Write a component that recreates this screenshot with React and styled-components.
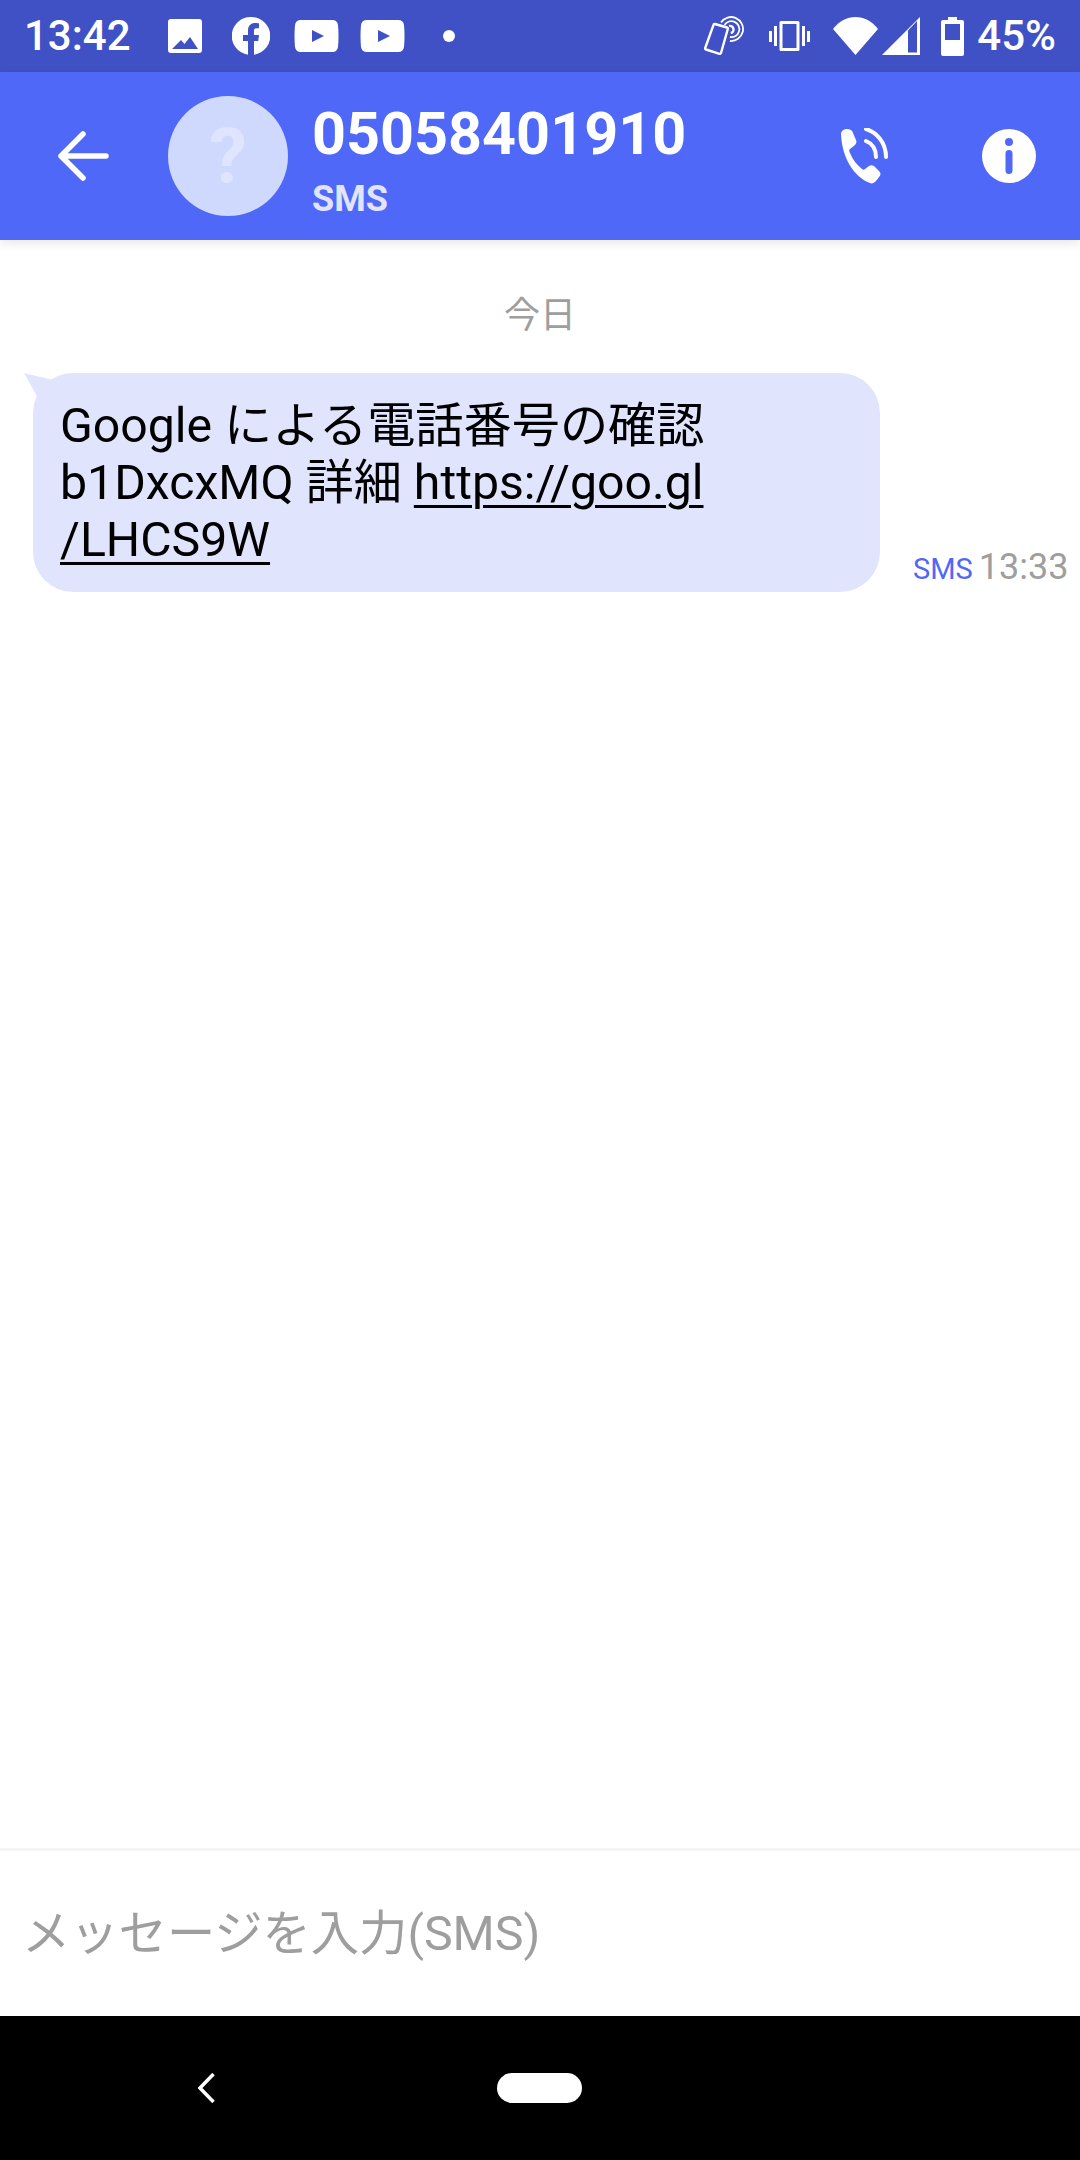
import React from 'react';
import styled, { createGlobalStyle } from 'styled-components';

const Global = createGlobalStyle`
  html, body {
    margin: 0;
    padding: 0;
    background: #fff;
  }
  body {
    font-family: Roboto, "Noto Sans CJK JP", sans-serif;
  }
`;

const Screen = styled.div`
  width: 1080px;
  height: 2160px;
  display: flex;
  flex-direction: column;
  overflow: hidden;
  background: #fff;
`;

const StatusBar = styled.div`
  height: 72px;
  flex: none;
  display: flex;
  align-items: center;
  justify-content: space-between;
  padding: 0 24px;
  background: #3f51c5;
  color: #fff;
`;

const StatusGroup = styled.div`
  display: flex;
  align-items: center;
`;

const StatusText = styled.span`
  font-size: 42px;
  font-weight: 500;
  line-height: 72px;
  margin: ${props => props.$margin || 0};
`;

const Icon = styled.svg`
  display: block;
  flex: none;
  margin: ${props => props.$margin || 0};
  fill: #fff;
`;

const Header = styled.header`
  height: 168px;
  flex: none;
  position: relative;
  display: flex;
  align-items: center;
  padding: 0 44px 0 58px;
  background: #4f68f8;
  box-shadow: 0 3px 10px rgba(0, 0, 0, 0.1);
`;

const Avatar = styled.div`
  width: 120px;
  height: 120px;
  flex: none;
  margin-left: 58px;
  border-radius: 50%;
  background: #cfd9fe;
  color: #dfe5fe;
  font-size: 76px;
  font-weight: 700;
  line-height: 120px;
  text-align: center;
`;

const Contact = styled.div`
  flex: 1;
  margin: 6px 0 0 24px;
  display: flex;
  flex-direction: column;
  color: #fff;
`;

const Number = styled.div`
  font-size: 59.3px;
  font-weight: 700;
  line-height: 70px;
`;

const Channel = styled.div`
  font-size: 36px;
  font-weight: 700;
  line-height: 42px;
  margin-top: 9px;
  color: #e0e5fd;
`;

const Thread = styled.main`
  flex: 1;
  display: flex;
  flex-direction: column;
  align-items: stretch;
`;

const DateLabel = styled.div`
  margin-top: 52px;
  font-size: 36px;
  line-height: 48px;
  color: #9e9e9e;
  text-align: center;
`;

const MessageRow = styled.div`
  display: flex;
  align-items: flex-end;
  margin-top: 33px;
  padding-left: 33px;
`;

const Bubble = styled.div`
  position: relative;
  width: 847px;
  height: 219px;
  box-sizing: border-box;
  flex: none;
  padding: 24px 27px;
  border-radius: 40px;
  background: #e0e5fd;
  color: #000;
  font-size: 48.2px;
  line-height: 57px;

  &::before {
    content: '';
    position: absolute;
    left: -9px;
    top: 0;
    width: 30px;
    height: 26px;
    background: #e0e5fd;
    clip-path: polygon(0 0, 100% 28%, 48% 100%);
  }
`;

const MessageLink = styled.a`
  color: #000;
  text-decoration: underline;
  text-decoration-thickness: 3px;
  text-underline-offset: 6px;
`;

const Meta = styled.div`
  display: flex;
  align-items: baseline;
  gap: 6px;
  margin: 0 0 3px 33px;
  line-height: 40px;
  white-space: nowrap;
`;

const MetaChannel = styled.span`
  font-size: 29px;
  color: #4f68f8;
`;

const MetaTime = styled.span`
  font-size: 36px;
  color: #9e9e9e;
`;

const Composer = styled.div`
  height: 168px;
  flex: none;
  box-sizing: border-box;
  display: flex;
  align-items: center;
  padding: 0 0 10px 22px;
  border-top: 3px solid #f4f4f4;
  font-size: 48.3px;
  color: #9e9e9e;
`;

const NavBar = styled.nav`
  height: 144px;
  flex: none;
  display: flex;
  align-items: center;
  padding-left: 198px;
  background: #000;
`;

const HomePill = styled.div`
  width: 85px;
  height: 30px;
  margin-left: 282px;
  border-radius: 15px;
  background: #fff;
`;

const NotificationIcons = () => (
  <StatusGroup>
    {/* gallery */}
    <Icon $margin="0 0 0 37px" width="34" height="34" viewBox="0 0 34 34">
      <path fillRule="evenodd" d="M3 0h28a3 3 0 0 1 3 3v28a3 3 0 0 1-3 3H3a3 3 0 0 1-3-3V3a3 3 0 0 1 3-3zM4 30h26l-8-12-5.500 7-3.500-4z" />
    </Icon>
    {/* facebook */}
    <Icon $margin="0 0 0 30px" width="38" height="38" viewBox="0 0 38 38">
      <path d="M19 0a19 19 0 0 0-3 37.800V24h-5v-6h5v-4.500C16 8.500 19 6 23.300 6c1.900 0 3.700.3 3.700.3v5h-2.400C22.200 11.300 22 12.700 22 14v4h5l-.8 6H22v13.800A19 19 0 0 0 19 0z" />
    </Icon>
    {/* youtube, twice */}
    <Icon $margin="0 0 0 24px" width="45" height="32" viewBox="0 0 45 32">
      <path fillRule="evenodd" d="M7 0h31a6 6 0 0 1 6 5q1 11 0 22a6 6 0 0 1-6 5H7a6 6 0 0 1-6-5Q0 16 1 5a6 6 0 0 1 6-5zM18 10v12l12-6z" />
    </Icon>
    <Icon $margin="0 0 0 21px" width="45" height="32" viewBox="0 0 45 32">
      <path fillRule="evenodd" d="M7 0h31a6 6 0 0 1 6 5q1 11 0 22a6 6 0 0 1-6 5H7a6 6 0 0 1-6-5Q0 16 1 5a6 6 0 0 1 6-5zM18 10v12l12-6z" />
    </Icon>
    <Icon $margin="0 0 0 38px" width="12" height="12" viewBox="0 0 12 12">
      <circle cx="6" cy="6" r="6" />
    </Icon>
  </StatusGroup>
);

const SystemIcons = () => (
  <StatusGroup>
    {/* nfc tap */}
    <Icon width="40" height="40" viewBox="0 0 40 40">
      <g fill="none" stroke="#fff">
        <path strokeWidth="2.400" d="M11 8l12 3.500a1.200 1.200 0 0 1 .8 1.500L17 37a1.200 1.200 0 0 1-1.500.8L2 33.500a1.200 1.200 0 0 1-.8-1.500L9.500 8.800A1.200 1.200 0 0 1 11 8z" />
        <path strokeWidth="1.800" d="M17 6.500A12 12 0 1 1 26 25" />
        <path strokeWidth="1.800" d="M20.500 9A8 8 0 1 1 26 21" />
        <path strokeWidth="2.400" d="M25 10a3.600 3.600 0 0 1 1.800 7" />
      </g>
    </Icon>
    {/* vibrate */}
    <Icon $margin="0 0 0 25px" width="41" height="30" viewBox="0 0 41 30">
      <path fillRule="evenodd" d="M12 0h17a1.500 1.500 0 0 1 1.500 1.500v27A1.500 1.500 0 0 1 29 30H12a1.500 1.500 0 0 1-1.500-1.500v-27A1.500 1.500 0 0 1 12 0zM13.500 3v24h14V3z" />
      <rect x="0" y="10" width="3" height="11" />
      <rect x="5" y="5" width="3" height="20" />
      <rect x="33" y="5" width="3" height="20" />
      <rect x="38" y="10" width="3" height="11" />
    </Icon>
    {/* wifi */}
    <Icon $margin="0 0 0 23px" width="45" height="38" viewBox="0 0 45 38">
      <path d="M0 12C6 4 14 0 22.500 0S39 4 45 12L22.500 38z" />
    </Icon>
    {/* signal */}
    <Icon $margin="0 0 0 4px" width="38" height="38" viewBox="0 0 38 38">
      <path fillRule="evenodd" d="M38 0v38H0zM26 13.500V35.500h9V4z" />
    </Icon>
    {/* battery */}
    <Icon $margin="0 0 0 21px" width="23" height="39" viewBox="0 0 23 39">
      <path fillRule="evenodd" d="M7 0h9v3h5a2 2 0 0 1 2 2v32a2 2 0 0 1-2 2H2a2 2 0 0 1-2-2V5a2 2 0 0 1 2-2h5zM4 7v16h15V7z" />
    </Icon>
    <StatusText $margin="0 0 0 13px">45%</StatusText>
  </StatusGroup>
);

export default function App() {
  return (
    <Screen>
      <Global />
      <StatusBar>
        <StatusGroup>
          <StatusText>13:42</StatusText>
          <NotificationIcons />
        </StatusGroup>
        <SystemIcons />
      </StatusBar>

      <Header>
        <Icon width="52" height="50" viewBox="0 0 52 50">
          <path d="M25 3L3 25l22 22M3 25h45" fill="none" stroke="#fff" strokeWidth="5.500" strokeLinecap="round" strokeLinejoin="round" />
        </Icon>
        <Avatar>?</Avatar>
        <Contact>
          <Number>05058401910</Number>
          <Channel>SMS</Channel>
        </Contact>
        <Icon $margin="0 94px 0 0" width="48" height="56" viewBox="0 0 48 56">
          <path d="M1 6c0-3 3-5 6-5 3 0 5 1 6 4l3 7c1 2 0 4-1 5l-5 4c-1 1-1 2 0 4 3 7 7 12 12 16 1 1 2 1 3 0l4-3c2-1 3-1 5 0l5 5c2 2 2 4 0 6l-3 4c-2 2-4 3-6 2C14 49 2 30 1 6z" />
          <path d="M26 1c10 3 20 13 20 28M26 13c5 2 10 7 10 16" fill="none" stroke="#fff" strokeWidth="4" strokeLinecap="round" />
        </Icon>
        <Icon width="54" height="54" viewBox="0 0 54 54">
          <path fillRule="evenodd" d="M27 0a27 27 0 1 1 0 54a27 27 0 0 1 0-54zM27 9a4 4 0 1 0 0 8a4 4 0 0 0 0-8zM27 21a3.500 3.500 0 0 0-3.500 3.500v17a3.500 3.500 0 0 0 7 0v-17A3.500 3.500 0 0 0 27 21z" />
        </Icon>
      </Header>

      <Thread>
        <DateLabel>今日</DateLabel>
        <MessageRow>
          <Bubble>
            Google による電話番号の確認<br />
            b1DxcxMQ 詳細 <MessageLink href="#">https://goo.gl<br />/LHCS9W</MessageLink>
          </Bubble>
          <Meta>
            <MetaChannel>SMS</MetaChannel>
            <MetaTime>13:33</MetaTime>
          </Meta>
        </MessageRow>
      </Thread>

      <Composer>メッセージを入力(SMS)</Composer>

      <NavBar>
        <Icon width="17" height="30" viewBox="0 0 17 30">
          <path d="M15.500 1L2 15l13.500 14" fill="none" stroke="#fff" strokeWidth="3.500" />
        </Icon>
        <HomePill />
      </NavBar>
    </Screen>
  );
}
